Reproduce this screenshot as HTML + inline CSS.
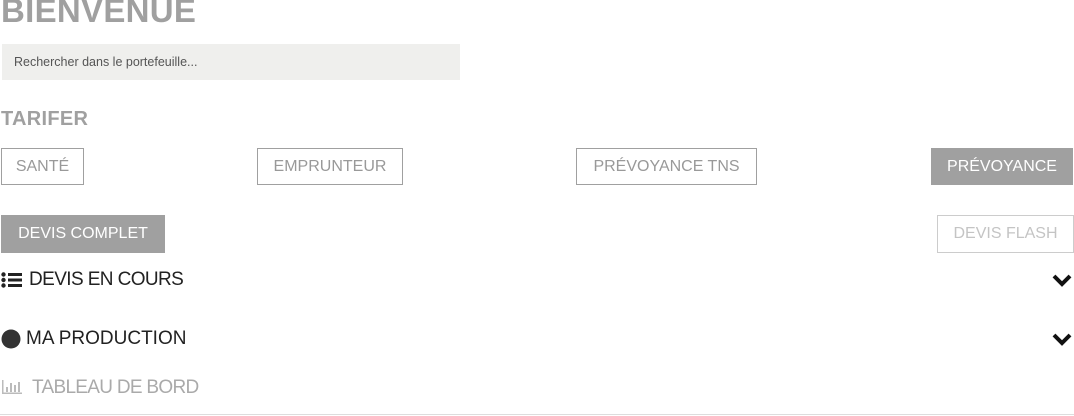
<!DOCTYPE html>
<html><head><meta charset="utf-8"><style>
*{margin:0;padding:0;box-sizing:border-box}
body{width:1074px;height:416px;background:#fff;position:relative;overflow:hidden;font-family:"Liberation Sans",sans-serif}
.a{position:absolute;white-space:nowrap}
.btn{position:absolute;border:1px solid #a0a0a0;color:#999;font-size:16px;display:flex;align-items:center;justify-content:center;height:37px}
.f{background:#a0a0a0;color:#fff;border-color:#a0a0a0}
.h{font-size:19px;color:#222}
</style></head><body>
<div class="a" style="left:1px;top:-8px;font-size:33px;font-weight:bold;color:#a0a0a0;letter-spacing:0.3px">BIENVENUE</div>
<div class="a" style="left:2px;top:44px;width:458px;height:36px;background:#efefed"></div>
<div class="a" style="left:14px;top:55px;font-size:12.5px;color:#555">Rechercher dans le portefeuille...</div>
<div class="a" style="left:1px;top:108px;font-size:20px;font-weight:bold;color:#a0a0a0;letter-spacing:0.3px">TARIFER</div>
<div class="btn" style="left:1px;top:148px;width:83px">SANTÉ</div>
<div class="btn" style="left:257px;top:148px;width:146px">EMPRUNTEUR</div>
<div class="btn" style="left:576px;top:148px;width:181px">PRÉVOYANCE TNS</div>
<div class="btn f" style="left:931px;top:148px;width:142px">PRÉVOYANCE</div>
<div class="btn f" style="left:1px;top:215px;width:164px;height:38px">DEVIS COMPLET</div>
<div class="btn" style="left:937px;top:215px;width:137px;height:38px;border-color:#ccc;color:#c4c4c4">DEVIS FLASH</div>
<svg class="a" style="left:1px;top:272px" width="22" height="16" viewBox="0 0 22 16"><circle cx="2.5" cy="2.5" r="2.2" fill="#222"/><circle cx="2.5" cy="8" r="2.2" fill="#222"/><circle cx="2.5" cy="13.5" r="2.2" fill="#222"/><rect x="7" y="1" width="14" height="3" fill="#222"/><rect x="7" y="6.5" width="14" height="3" fill="#222"/><rect x="7" y="12" width="14" height="3" fill="#222"/></svg>
<div class="a h" style="left:29px;top:269px;letter-spacing:-0.6px">DEVIS EN COURS</div>
<svg class="a" style="left:1052px;top:273px" width="20" height="14" viewBox="0 0 20 14"><path d="M2 3l8 8 8-8" stroke="#111" stroke-width="4" fill="none"/></svg>
<svg class="a" style="left:1px;top:329px" width="20" height="20"><circle cx="10" cy="10" r="9.5" fill="#333"/></svg>
<div class="a h" style="left:26px;top:328px">MA PRODUCTION</div>
<svg class="a" style="left:1052px;top:332px" width="20" height="14" viewBox="0 0 20 14"><path d="M2 3l8 8 8-8" stroke="#111" stroke-width="4" fill="none"/></svg>
<svg class="a" style="left:2px;top:380px" width="20" height="14" viewBox="0 0 20 14"><g fill="#bbb"><rect x="0" y="0" width="1.5" height="14"/><rect x="0" y="12.5" width="20" height="1.5"/><rect x="4" y="7" width="2" height="5"/><rect x="8" y="3" width="2" height="9"/><rect x="12" y="5" width="2" height="7"/><rect x="16" y="2" width="2" height="10"/></g></svg>
<div class="a h" style="left:32px;top:377px;color:#aaa;letter-spacing:-0.7px">TABLEAU DE BORD</div>
<div class="a" style="left:0;top:414px;width:1074px;height:1px;background:#ddd"></div>
</body></html>
